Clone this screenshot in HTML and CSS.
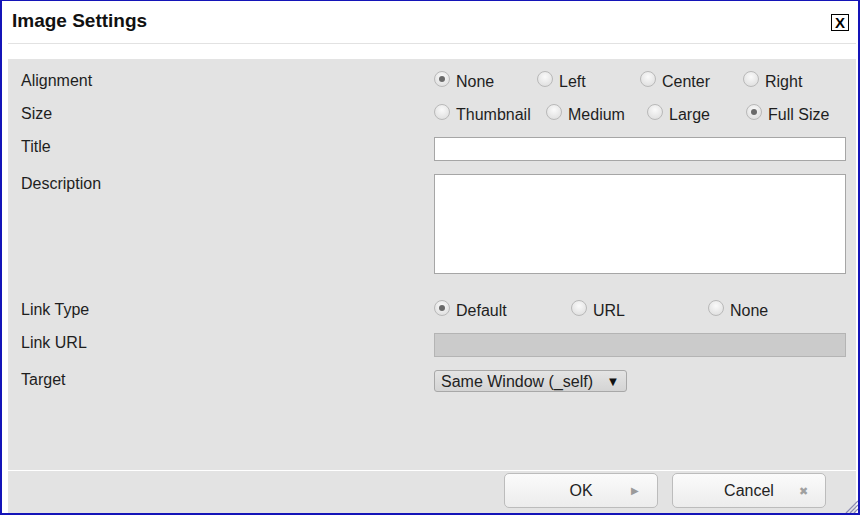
FILE: index.html
```html
<!DOCTYPE html>
<html lang="en">
<head>
<meta charset="UTF-8">
<title>Image Settings</title>
<link rel="stylesheet" href="styles.css">
</head>
<body>
<div class="dialog">
  <div class="dialog-header">
    <h1>Image Settings</h1>
    <span class="close-btn">X</span>
  </div>

  <div class="panel">
    <div class="panel-body">
      <div class="row">
        <div class="label">Alignment</div>
        <div class="options opts-align">
          <span class="opt"><span class="radio checked"></span>None</span>
          <span class="opt"><span class="radio"></span>Left</span>
          <span class="opt"><span class="radio"></span>Center</span>
          <span class="opt"><span class="radio"></span>Right</span>
        </div>
      </div>

      <div class="row">
        <div class="label">Size</div>
        <div class="options opts-size">
          <span class="opt"><span class="radio"></span>Thumbnail</span>
          <span class="opt"><span class="radio"></span>Medium</span>
          <span class="opt"><span class="radio"></span>Large</span>
          <span class="opt"><span class="radio checked"></span>Full Size</span>
        </div>
      </div>

      <div class="row row-field">
        <div class="label">Title</div>
        <input type="text" class="text-input">
      </div>

      <div class="row row-desc">
        <div class="label">Description</div>
        <textarea class="text-area"></textarea>
      </div>

      <div class="row">
        <div class="label">Link Type</div>
        <div class="options opts-link">
          <span class="opt"><span class="radio checked"></span>Default</span>
          <span class="opt"><span class="radio"></span>URL</span>
          <span class="opt"><span class="radio"></span>None</span>
        </div>
      </div>

      <div class="row row-field">
        <div class="label">Link URL</div>
        <input type="text" class="text-input disabled" disabled>
      </div>

      <div class="row">
        <div class="label">Target</div>
        <div class="select">Same Window (_self) <span class="caret">&#9660;</span></div>
      </div>
    </div>

    <div class="panel-footer">
      <button class="btn btn-ok">OK <span class="btn-icon">&#9654;</span></button>
      <button class="btn btn-cancel">Cancel <span class="btn-icon x">&#10006;</span></button>
    </div>
  </div>

  <svg class="grip" width="14" height="14" viewBox="0 0 14 14">
    <line x1="2" y1="14" x2="14" y2="2" stroke="#8a8ab0" stroke-width="1.2"/>
    <line x1="6" y1="14" x2="14" y2="6" stroke="#8a8ab0" stroke-width="1.2"/>
    <line x1="10" y1="14" x2="14" y2="10" stroke="#8a8ab0" stroke-width="1.2"/>
  </svg>
</div>
</body>
</html>
```

FILE: styles.css
```css
body {
  margin: 0;
  padding: 0;
  font-family: "Liberation Sans", Arial, sans-serif;
  color: #1e1e1e;
  background: #fff;
}

.dialog {
  position: relative;
  width: 860px;
  height: 515px;
  box-sizing: border-box;
  border: 2px solid #1414b8;
  border-top-width: 1px;
  background: #fff;
  display: flex;
  flex-direction: column;
}

.dialog-header {
  height: 42px;
  display: flex;
  align-items: center;
  justify-content: space-between;
  padding: 0 7px 0 10px;
  margin-left: 6px;
  margin-right: 2px;
  border-bottom: 1px solid #e2e2e2;
}

.dialog-header h1 {
  margin: 0 0 2px -6px;
  font-size: 19px;
  font-weight: bold;
  color: #111;
}

.close-btn {
  width: 16px;
  height: 15px;
  border: 1px solid #000;
  font-size: 15px;
  font-weight: bold;
  line-height: 16px;
  text-align: center;
  color: #000;
  margin-top: 1px;
}

.panel {
  flex: 1;
  margin: 15px 2px 0 6px;
  background: #e3e3e3;
  display: flex;
  flex-direction: column;
}

.panel-body {
  height: 400px;
  padding: 11px 10px 0 13px;
  border-bottom: 1px solid #fff;
}

.row {
  display: flex;
  height: 33px;
  font-size: 16px;
}

.row-field {
  height: 37px;
}

.row-desc {
  height: 126px;
}

.label {
  width: 413px;
  flex: none;
  line-height: 20px;
  padding-top: 1px;
}

.options {
  display: grid;
  line-height: 20px;
  padding-top: 2px;
}

.opts-align {
  grid-template-columns: 103px 103px 103px auto;
}

.opts-size {
  grid-template-columns: 112px 101px 99px auto;
}

.opts-link {
  grid-template-columns: 137px 137px auto;
}

.opt {
  display: flex;
  align-items: flex-start;
  white-space: nowrap;
}

.radio {
  width: 14px;
  height: 14px;
  border: 1px solid #b9b9b9;
  border-radius: 50%;
  background: radial-gradient(circle at 50% 35%, #fafafa, #dadada);
  margin: -1px 6px 0 0;
  box-sizing: content-box;
  display: flex;
  align-items: center;
  justify-content: center;
}

.radio.checked::after {
  content: "";
  width: 6px;
  height: 6px;
  border-radius: 50%;
  background: #6a6a6a;
}

.text-input {
  width: 412px;
  height: 24px;
  margin: 1px 0 0;
  padding: 0 4px;
  box-sizing: border-box;
  border: 1px solid #a6a6a6;
  background: #fff;
  font: inherit;
}

.text-input.disabled {
  background: #cbcbcb;
  border-color: #b4b4b4;
}

.text-area {
  width: 412px;
  height: 100px;
  margin: 1px 0 0;
  box-sizing: border-box;
  border: 1px solid #a6a6a6;
  background: #fff;
  resize: none;
  font: inherit;
}

.select {
  width: 193px;
  height: 22px;
  margin-top: 1px;
  box-sizing: border-box;
  border: 1px solid #a8a8a8;
  border-radius: 3px;
  background: linear-gradient(#e4e4e4, #d4d4d4);
  padding-left: 6px;
  font-size: 16px;
  line-height: 21px;
  color: #222;
  white-space: nowrap;
}

.caret {
  font-size: 13px;
  margin-left: 9px;
  vertical-align: 1px;
  color: #111;
}

.panel-footer {
  flex: 1;
  display: flex;
  justify-content: flex-end;
  align-items: flex-start;
  gap: 14px;
  padding: 2px 30px 0 0;
}

.btn {
  width: 154px;
  height: 35px;
  border: 1px solid #bcbcbc;
  border-radius: 5px;
  background: linear-gradient(#fbfbfb, #ececec);
  font-family: "Liberation Sans", Arial, sans-serif;
  font-size: 16px;
  color: #222;
  position: relative;
  padding: 0;
  cursor: pointer;
}

.btn-ok {
  padding-right: 0;
}

.btn-icon {
  position: absolute;
  top: 11px;
  right: 18px;
  color: #9a9a9a;
  font-size: 10px;
}

.btn-icon.x {
  right: 17px;
  top: 11px;
  font-size: 11px;
  color: #a0a0a0;
}

.grip {
  position: absolute;
  right: 0;
  bottom: 0;
}
```
